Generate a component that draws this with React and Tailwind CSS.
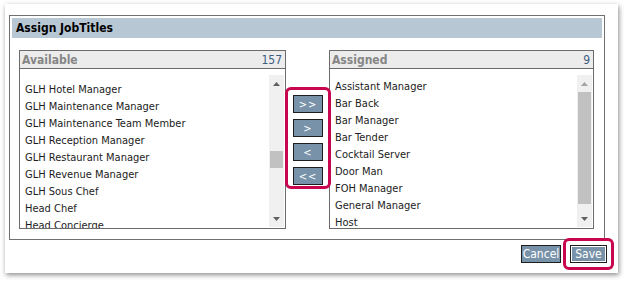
import { useState } from "react";

const available = [
  "GLH Hotel Manager",
  "GLH Maintenance Manager",
  "GLH Maintenance Team Member",
  "GLH Reception Manager",
  "GLH Restaurant Manager",
  "GLH Revenue Manager",
  "GLH Sous Chef",
  "Head Chef",
  "Head Concierge",
];

const assigned = [
  "Assistant Manager",
  "Bar Back",
  "Bar Manager",
  "Bar Tender",
  "Cocktail Server",
  "Door Man",
  "FOH Manager",
  "General Manager",
  "Host",
];

function Arrow({ up, light }) {
  return (
    <svg width="7" height="4" viewBox="0 0 7 4" className="block">
      <polygon points={up ? "0,4 7,4 3.5,0" : "0,0 7,0 3.5,4"} fill={light ? "#a3a3a3" : "#606060"} />
    </svg>
  );
}

function ListBox({ title, count, items, padTop, thumbTop, thumbHeight, topLight, className }) {
  return (
    <div className={`flex h-[179px] flex-col border border-[#6b6b6b] bg-white ${className}`}>
      <div className="flex h-[18px] items-center justify-between border-b border-[#6b6b6b] bg-[#ececec] pl-[2px] pr-[3px]">
        <span className="text-[12px] font-bold text-[#868686]">{title}</span>
        <span className="text-[12px] text-[#3d5c82]">{count}</span>
      </div>
      <div className="flex min-h-0 flex-1">
        <ul className={`min-w-0 flex-1 overflow-hidden pl-[5px] ${padTop}`}>
          {items.map((item) => (
            <li key={item} className="h-[17px] whitespace-nowrap text-[11px] leading-[17px] text-[#1c1c1c]">
              {item}
            </li>
          ))}
        </ul>
        <div className="mb-[1px] mr-[1px] mt-[6px] flex w-[15px] flex-col bg-[#f0f0f0]">
          <div className="flex h-[17px] items-center justify-center">
            <Arrow up light={topLight} />
          </div>
          <div className="flex-1 px-[1px]">
            <div className={`bg-[#c1c1c1] ${thumbTop} ${thumbHeight}`} />
          </div>
          <div className="flex h-[17px] items-center justify-center">
            <Arrow />
          </div>
        </div>
      </div>
    </div>
  );
}

function MoveButton({ label }) {
  return (
    <button className="flex h-[18px] w-[30px] items-center justify-center border border-[#1e1e1e] bg-[#7892a9] text-[11px] leading-none tracking-[1px] text-white">
      {label}
    </button>
  );
}

export default function App() {
  const [saved, setSaved] = useState(false);
  return (
    <div className="h-[283px] w-[627px] bg-white font-['DejaVu_Sans_Condensed','Liberation_Sans',sans-serif] pl-[5px] pt-[4px]">
      <div className="flex h-[269px] w-[613px] flex-col bg-white pb-[4px] pl-[4px] pr-[4px] pt-[11px] shadow-[1px_2px_5px_rgba(0,0,0,0.45)]">
        <div className="mr-[9px] border border-[#707070] p-[2px]">
          <div className="flex h-[20px] items-center bg-[#b7c7d3] pl-[4px] text-[12px] font-bold text-black">
            Assign JobTitles
          </div>
          <div className="mb-[8px] mt-[12px] flex pl-[7px] pr-[8px]">
            <ListBox
              title="Available"
              count="157"
              items={available}
              padTop="pt-[12px]"
              thumbTop="mt-[59px]"
              thumbHeight="h-[17px]"
              className="w-[267px]"
            />
            <div className="relative z-10 -ml-[1px] -mr-[2px] mt-[37px] flex h-[102px] w-[46px] flex-col gap-[6px] self-start rounded-[6px] border-[3px] border-[#c8064f] bg-white px-[5px] pt-[5px]">
              <MoveButton label=">>" />
              <MoveButton label=">" />
              <MoveButton label="<" />
              <MoveButton label="<<" />
            </div>
            <ListBox
              title="Assigned"
              count="9"
              items={assigned}
              padTop="pt-[9px]"
              thumbTop="mt-0"
              thumbHeight="h-[112px]"
              topLight
              className="flex-1"
            />
          </div>
        </div>
        <div className="relative z-10 -mt-[2px] flex items-center justify-end gap-[2px]">
          <button className="h-[18px] w-[40px] border border-[#1e1e1e] bg-[#7892a9] text-[12px] leading-none text-white">
            Cancel
          </button>
          <div className="rounded-[6px] border-[3px] border-[#c8064f] bg-white p-[4px]">
            <button
              onClick={() => setSaved(!saved)}
              className="block h-[18px] w-[37px] border border-[#1e1e1e] bg-[#7892a9] text-[12px] leading-none text-white shadow-[inset_0_0_0_1px_#ffffff]"
            >
              Save
            </button>
          </div>
        </div>
      </div>
    </div>
  );
}
